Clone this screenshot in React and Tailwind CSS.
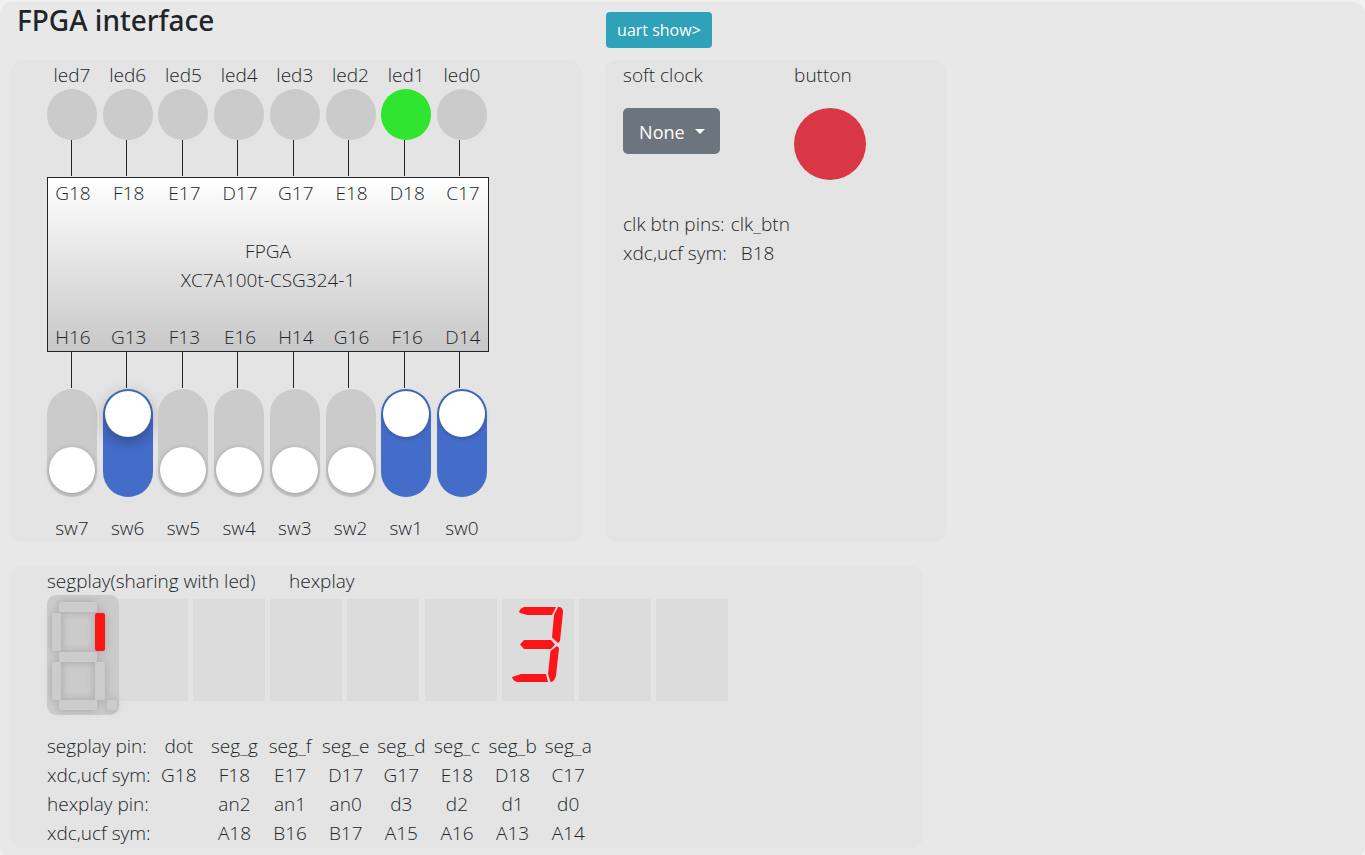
import { useState } from "react";

const LED_PINS = ["G18", "F18", "E17", "D17", "G17", "E18", "D18", "C17"];
const SWITCH_PINS = ["H16", "G13", "F13", "E16", "H14", "G16", "F16", "D14"];
const INDICES = [7, 6, 5, 4, 3, 2, 1, 0];

const PIN_TABLE = [
  ["segplay pin:", "dot", "seg_g", "seg_f", "seg_e", "seg_d", "seg_c", "seg_b", "seg_a"],
  ["xdc,ucf sym:", "G18", "F18", "E17", "D17", "G17", "E18", "D18", "C17"],
  ["hexplay pin:", "", "an2", "an1", "an0", "d3", "d2", "d1", "d0"],
  ["xdc,ucf sym:", "", "A18", "B16", "B17", "A15", "A16", "A13", "A14"],
];

const SEGMENTS = [
  { id: "a", x: 12, y: 7, w: 38, h: 10 },
  { id: "f", x: 5, y: 18, w: 9, h: 38 },
  { id: "g", x: 12, y: 57, w: 38, h: 10 },
  { id: "e", x: 5, y: 67, w: 9, h: 38 },
  { id: "c", x: 48, y: 67, w: 10, h: 38 },
  { id: "d", x: 12, y: 105, w: 38, h: 10 },
  { id: "dot", x: 60, y: 105, w: 10, h: 10 },
  { id: "b", x: 48, y: 18, w: 10, h: 38 },
];

const CAPTION = "pt-0.5 leading-[27px]";

function Wires() {
  return (
    <div className="ml-6 flex w-[389px] justify-between" aria-hidden="true">
      {INDICES.map((i) => (
        <span key={i} className="h-9 w-px bg-[#212529]" />
      ))}
    </div>
  );
}

function Pins({ pins }) {
  return (
    <div className={`flex justify-between ${CAPTION}`}>
      {pins.map((pin) => (
        <span key={pin} className="w-[50px] text-center">{pin}</span>
      ))}
    </div>
  );
}

function Led({ index, lit }) {
  return (
    <div className="flex w-[50px] flex-col items-center">
      <span className={CAPTION}>led{index}</span>
      <span className={`h-[51px] w-[50px] rounded-full ${lit ? "bg-[#30e52f]" : "bg-[#cbcbcb]"}`} />
    </div>
  );
}

function Switch({ index, checked, active, onChange }) {
  return (
    <label className="flex w-[50px] flex-col items-center gap-4">
      <input
        type="checkbox"
        checked={checked}
        onChange={onChange}
        className={`h-[108px] w-[50px] cursor-pointer appearance-none rounded-full bg-[#cbcbcb] p-0.5 outline-none before:block before:h-[46px] before:w-[46px] before:rounded-full before:bg-white before:transition-[margin] before:content-[''] checked:bg-[#446dca] not-checked:before:mt-14 ${
          active
            ? "before:shadow-[0_4px_15px_rgba(0,0,0,0.35)]"
            : "before:shadow-[0_1px_5px_rgba(0,0,0,0.25)]"
        }`}
      />
      <span className={CAPTION}>sw{index}</span>
    </label>
  );
}

function BoardPanel() {
  const [on, setOn] = useState([6, 1, 0]);
  const toggle = (i) => setOn(on.includes(i) ? on.filter((n) => n !== i) : [...on, i]);
  return (
    <section className="flex w-[42.45%] shrink-0 flex-col rounded-xl bg-[#e4e4e4] pl-9">
      <div className="flex w-[440px] justify-between">
        {INDICES.map((i) => (
          <Led key={i} index={i} lit={i === 1} />
        ))}
      </div>
      <Wires />
      <div className="mt-px flex h-[175px] w-[442px] flex-col justify-between border border-[#212529] bg-linear-to-b from-white to-[#c8c8c8]">
        <Pins pins={LED_PINS} />
        <div className="pt-0.5 text-center">
          <p>FPGA</p>
          <p>XC7A100t-CSG324-1</p>
        </div>
        <Pins pins={SWITCH_PINS} />
      </div>
      <Wires />
      <div className="mt-px flex w-[440px] justify-between">
        {INDICES.map((i) => (
          <Switch key={i} index={i} checked={on.includes(i)} active={i === 6} onChange={() => toggle(i)} />
        ))}
      </div>
    </section>
  );
}

function ClockPanel() {
  return (
    <section className="w-[25.4%] shrink-0 rounded-xl bg-[#e4e4e4] pl-[18px]">
      <div className="flex">
        <div className="flex w-[171px] flex-col items-start">
          <label htmlFor="clock" className={CAPTION}>soft clock</label>
          <div className="relative mt-[19px]">
            <select
              id="clock"
              defaultValue="None"
              className="h-[46px] w-[97px] appearance-none rounded-[5px] bg-[#6c757d] pl-4 pt-0.5 text-[18px] font-normal text-white"
            >
              <option>None</option>
              <option>1Hz</option>
              <option>10Hz</option>
            </select>
            <svg viewBox="0 0 10 5" className="pointer-events-none absolute right-[15px] top-[21px] h-[5px] w-[10px] fill-white" aria-hidden="true">
              <path d="M0 0h10L5 5z" />
            </svg>
          </div>
        </div>
        <div className="flex flex-col items-start">
          <span id="push" className={CAPTION}>button</span>
          <button type="button" aria-labelledby="push" className="mt-[19px] h-[72px] w-[72px] rounded-full bg-[#d93646]" />
        </div>
      </div>
      <dl className="mt-[30px] grid grid-cols-[auto_1fr] gap-x-1">
        <dt>clk btn pins:</dt>
        <dd>clk_btn</dd>
        <dt>xdc,ucf sym:</dt>
        <dd className="pl-2.5">B18</dd>
      </dl>
    </section>
  );
}

function SegmentDisplay() {
  return (
    <svg viewBox="0 0 72 120" className="relative z-10 h-[120px] w-[72px] overflow-visible" role="img" aria-label="segplay">
      <defs>
        <filter id="seg-shadow" x="-50%" y="-50%" width="200%" height="200%">
          <feDropShadow dx="0" dy="0" stdDeviation="4" floodOpacity="0.2" />
        </filter>
      </defs>
      <rect width="72" height="120" rx="9" fill="#cbcbcb" />
      <g filter="url(#seg-shadow)">
        {SEGMENTS.map((s) => (
          <rect key={s.id} x={s.x} y={s.y} width={s.w} height={s.h} rx="2" fill={s.id === "b" ? "#fb1418" : "#cccccc"} />
        ))}
      </g>
    </svg>
  );
}

function HexThree() {
  return (
    <svg viewBox="0 0 72 102" className="h-full w-full fill-[#fb1418]" role="img" aria-label="3">
      <path d="M17 12.500L19 9.500L22 8H54L50 16H25L18 14Z" />
      <path d="M56 8H58Q61 9 61 13L58 42L56 44L50 38.500L52 16Z" />
      <path d="M18 45.500L22 41H49L53 45.500L49 50H22Z" />
      <path d="M55 47L57 49L54 77Q52 83 48.500 83L46 75L48.500 52Z" />
      <path d="M10 78L19 75H44L46 83H15Q11 82 10 78Z" />
    </svg>
  );
}

function DisplayPanel() {
  return (
    <section className="mt-6 w-[67.9%] rounded-xl bg-[#e4e4e4] pl-9">
      <div className={`flex ${CAPTION}`}>
        <h2 className="w-[242px]">segplay(sharing with led)</h2>
        <h2>hexplay</h2>
      </div>
      <div className="flex">
        <SegmentDisplay />
        <div className="-ml-[3px] mt-1 flex h-[102px] w-[612px] justify-between">
          {INDICES.map((i) => (
            <div key={i} className="w-[72px] bg-[#dcdcdc]">{i === 2 && <HexThree />}</div>
          ))}
        </div>
      </div>
      <table className="mt-[17px] w-[549px] table-fixed">
        <tbody>
          {PIN_TABLE.map(([name, ...pins], row) => (
            <tr key={row}>
              <th scope="row" className="w-[104px] whitespace-nowrap p-0 text-left font-light">{name}</th>
              {pins.map((pin, col) => (
                <td key={col} className="p-0 text-center">{pin}</td>
              ))}
            </tr>
          ))}
        </tbody>
      </table>
    </section>
  );
}

export default function App() {
  return (
    <div className="min-h-screen bg-[#f1f1f1] pt-0.5 font-['Open_Sans','Noto_Sans',sans-serif] text-[19px] font-light leading-[29px] text-[#212529]">
      <main className="rounded-xl bg-[#e8e8e8] px-[11px] pb-2.5">
        <header className="flex h-[58px] items-start">
          <h1 className="w-[44.3%] pl-1.5 pt-px font-['Noto_Sans','Open_Sans',sans-serif] text-[28px] font-medium leading-[34px]">FPGA interface</h1>
          <button type="button" className="mt-2.5 h-9 w-[106px] rounded bg-[#2fa2b9] text-base font-normal text-white">
            uart show&gt;
          </button>
        </header>
        <div className="flex gap-6">
          <BoardPanel />
          <ClockPanel />
        </div>
        <DisplayPanel />
      </main>
    </div>
  );
}
